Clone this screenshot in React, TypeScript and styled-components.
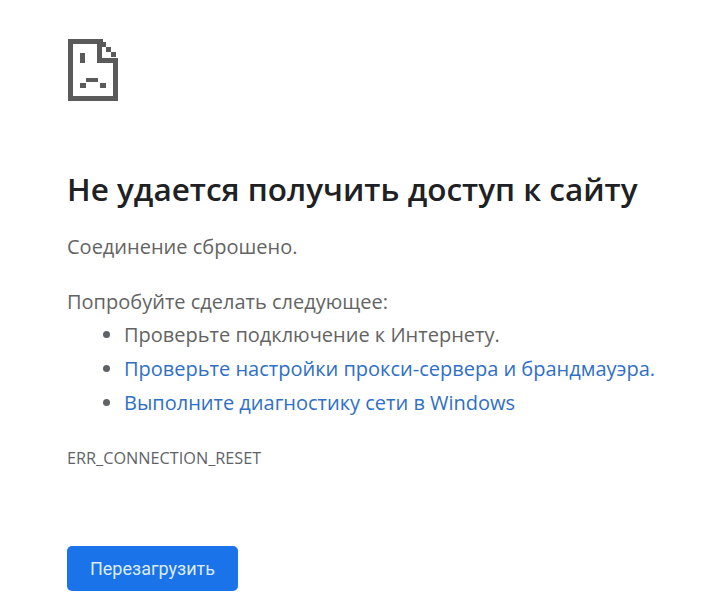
import React from "react";
import styled, { createGlobalStyle } from "styled-components";

const GlobalStyle = createGlobalStyle`
  html, body {
    margin: 0;
    padding: 0;
    background: #fff;
  }
`;

const Page = styled.div`
  width: 720px;
  height: 601px;
  overflow: hidden;
  box-sizing: border-box;
  padding: 39px 0 0 67px;
  font-family: "Open Sans", "Noto Sans", sans-serif;
  color: #646464;
`;

const IconWrap = styled.div`
  width: 51px;
  height: 62px;
  margin: 0 0 67px 1px;
`;

const Title = styled.h1`
  margin: 0 0 20px;
  font-size: 31.5px;
  line-height: 42px;
  font-weight: 600;
  color: #202124;
`;

const Text = styled.p`
  margin: 0;
  font-size: 20px;
  line-height: 34px;
`;

const Reason = styled(Text)`
  margin-bottom: 21px;
`;

const Tips = styled.ul`
  margin: -1px 0 28px;
  padding: 0 0 0 57px;
  font-size: 20px;
  line-height: 34px;
`;

const Tip = styled.li`
  &::marker {
    color: #5f6368;
  }
`;

const TipLink = styled.a`
  color: #2f6fc6;
  text-decoration: none;
`;

const ErrorCode = styled.div`
  font-size: 16.25px;
  line-height: 20px;
  color: #5f6368;
  margin-bottom: 78px;
`;

const ReloadButton = styled.button`
  display: block;
  width: 171px;
  height: 45px;
  border: none;
  border-radius: 5px;
  background: #1a73e8;
  color: #dcebfb;
  font-family: "Roboto", sans-serif;
  font-size: 18px;
  font-weight: 400;
  cursor: pointer;
`;

const SadTab = () => (
  <svg width="51" height="62" viewBox="0 0 51 62" fill="#5a5a5a">
    <path d="M0 0h35v5H5v52h40V19h5v43H0z" />
    <path d="M29 0h5v19h16v5H29z" />
    <path d="M33 3h5v5h-5zM38 8h5v5h-5zM43 13h5v5h-5z" />
    <path d="M12 14h5v10h-5z" />
    <path d="M18 39h12v4H18zM12 44h6v5h-6zM32 44h6v5h-6z" />
  </svg>
);

export default function App() {
  return (
    <Page>
      <GlobalStyle />
      <IconWrap>
        <SadTab />
      </IconWrap>
      <Title>Не удается получить доступ к сайту</Title>
      <Reason>Соединение сброшено.</Reason>
      <Text>Попробуйте сделать следующее:</Text>
      <Tips>
        <Tip>Проверьте подключение к Интернету.</Tip>
        <Tip>
          <TipLink href="#">Проверьте настройки прокси-сервера и брандмауэра.</TipLink>
        </Tip>
        <Tip>
          <TipLink href="#">Выполните диагностику сети в Windows</TipLink>
        </Tip>
      </Tips>
      <ErrorCode>ERR_CONNECTION_RESET</ErrorCode>
      <ReloadButton>Перезагрузить</ReloadButton>
    </Page>
  );
}
